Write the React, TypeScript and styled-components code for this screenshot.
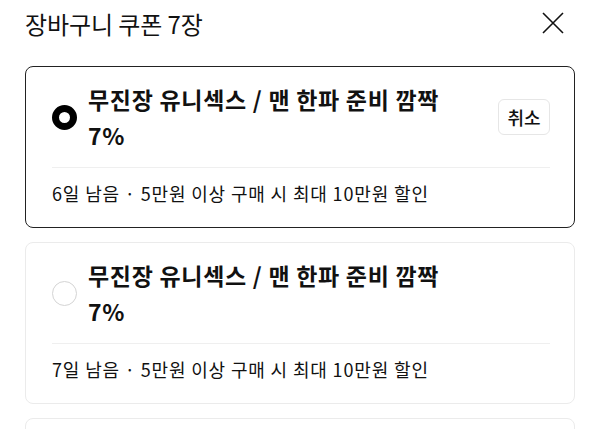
import styled, { createGlobalStyle } from "styled-components";

const GlobalStyle = createGlobalStyle`
  body {
    margin: 0;
    background: #fff;
    font-family: "Noto Sans CJK KR", "Noto Sans", sans-serif;
    color: #111;
  }
`;

const Sheet = styled.div`
  width: 600px;
  height: 429px;
  overflow: hidden;
  padding: 0 25px;
  box-sizing: border-box;
`;

const Header = styled.header`
  height: 46px;
  display: flex;
  align-items: center;
  justify-content: space-between;
  margin-bottom: 20px;
`;

const Title = styled.h1`
  margin: 0;
  font-size: 24px;
  font-weight: 400;
  letter-spacing: -0.1px;
`;

const CloseButton = styled.button`
  width: 22px;
  height: 22px;
  margin-right: 11px;
  padding: 0;
  border: none;
  background: none;
  cursor: pointer;
  display: flex;
`;

const List = styled.div`
  display: flex;
  flex-direction: column;
  gap: 14px;
`;

const Card = styled.div<{ $selected: boolean }>`
  border: ${(p) => (p.$selected ? "1.5px solid #222" : "1.5px solid #ebebeb")};
  border-radius: 8px;
  padding: 14px 24px 0 26px;
`;

const Top = styled.div`
  display: flex;
  align-items: center;
  padding-bottom: 14px;
  border-bottom: 1px solid #efefef;
`;

const Radio = styled.span<{ $checked: boolean }>`
  flex: none;
  width: 25px;
  height: 25px;
  box-sizing: border-box;
  border-radius: 50%;
  border: ${(p) => (p.$checked ? "7px solid #000" : "1.5px solid #d4d4d4")};
  margin-right: 11px;
`;

const Name = styled.div`
  flex: 1;
  font-size: 23px;
  font-weight: 700;
  line-height: 36px;
  letter-spacing: 0.7px;
`;

const CancelButton = styled.button`
  flex: none;
  width: 52px;
  height: 36px;
  border: 1px solid #e6e6e6;
  border-radius: 6px;
  background: #fff;
  font-family: inherit;
  font-size: 18px;
  font-weight: 500;
  color: #111;
  padding: 0;
`;

const Footer = styled.div`
  padding: 13px 0 22px;
  font-size: 18px;
  line-height: 24px;
  letter-spacing: 0.85px;
`;

type Coupon = { days: number; selected: boolean };

const coupons: Coupon[] = [
  { days: 6, selected: true },
  { days: 7, selected: false },
  { days: 7, selected: false },
];

export default function App() {
  return (
    <>
      <GlobalStyle />
      <Sheet>
        <Header>
          <Title>장바구니 쿠폰 7장</Title>
          <CloseButton aria-label="닫기">
            <svg width="22" height="22" viewBox="0 0 22 22">
              <path d="M1 1L21 21M21 1L1 21" stroke="#111" strokeWidth="1.6" fill="none" />
            </svg>
          </CloseButton>
        </Header>
        <List>
          {coupons.map((c, i) => (
            <Card key={i} $selected={c.selected}>
              <Top>
                <Radio $checked={c.selected} />
                <Name>
                  무진장 유니섹스 / 맨 한파 준비 깜짝
                  <br />
                  7%
                </Name>
                {c.selected && <CancelButton>취소</CancelButton>}
              </Top>
              <Footer>{c.days}일 남음 · 5만원 이상 구매 시 최대 10만원 할인</Footer>
            </Card>
          ))}
        </List>
      </Sheet>
    </>
  );
}
